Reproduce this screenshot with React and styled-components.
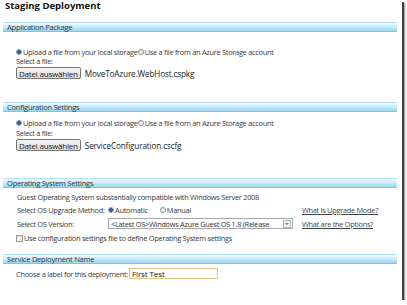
import React from "react";
import styled, { createGlobalStyle } from "styled-components";

const GlobalStyle = createGlobalStyle`
  html, body {
    margin: 0;
    padding: 0;
    background: #fff;
  }
  body {
    font-family: "Open Sans", "DejaVu Sans", sans-serif;
    color: #3a3a3a;
  }
`;

const Frame = styled.div`
  width: 402px;
  height: 300px;
  background: #fff;
  box-shadow: 2px 2px 0 #404040, 3px 3px 2px rgba(0, 0, 0, 0.45);
  overflow: hidden;
  box-sizing: border-box;
  letter-spacing: -0.28px;
`;

const Title = styled.div`
  font-weight: 700;
  font-size: 9.5px;
  line-height: 12px;
  color: #111;
  padding-left: 5px;
  letter-spacing: 0;
`;

const Section = styled.section`
  margin-top: ${(p) => p.$top}px;
`;

const Header = styled.div`
  margin: 0 5px 0 3px;
  height: 10px;
  box-sizing: border-box;
  border-top: 1px solid #b2e0f3;
  border-bottom: 1px solid #74c7e8;
  background: linear-gradient(#f0f9fe, #cdebf9 45%, #9cd8f1);
  font-size: 7.6px;
  line-height: 8px;
  color: #333;
  padding-left: 4px;
`;

const Body = styled.div`
  padding-left: ${(p) => p.$indent || 16}px;
`;

const Row = styled.div`
  display: flex;
  align-items: center;
  height: ${(p) => p.$h || 9}px;
  margin-top: ${(p) => p.$top || 0}px;
  font-size: 7.4px;
  white-space: nowrap;
`;

const RadioDot = styled.span`
  display: inline-block;
  box-sizing: border-box;
  width: 6px;
  height: 6px;
  border-radius: 50%;
  border: 1px solid #8a8a8a;
  background: ${(p) =>
    p.$on
      ? "radial-gradient(circle, #1d5fb8 0 1.6px, #dfe8f3 2px)"
      : "linear-gradient(#e6e6e6, #fff)"};
  margin-right: 1px;
  flex: none;
`;

const Option = styled.label`
  display: inline-flex;
  align-items: center;
  margin-right: ${(p) => p.$gap || 0}px;
`;

const FileButton = styled.button`
  height: 12px;
  padding: 0 2px;
  box-sizing: border-box;
  border: 1px solid #777;
  border-radius: 2px;
  background: linear-gradient(#f4f4f4, #dcdcdc);
  font-family: inherit;
  font-size: 8px;
  line-height: 9px;
  letter-spacing: -0.2px;
  color: #222;
`;

const FileName = styled.span`
  margin-left: 4px;
  font-size: 8.2px;
  letter-spacing: -0.15px;
  color: #222;
`;

const FieldLabel = styled.span`
  width: ${(p) => p.$w}px;
  flex: none;
`;

const Select = styled.div`
  display: flex;
  align-items: center;
  width: 185px;
  height: 11px;
  box-sizing: border-box;
  border: 1px solid #a8a8a8;
  font-size: 7.4px;
  color: #333;
  padding-left: 2px;
  flex: none;
`;

const SelectText = styled.span`
  flex: 1;
  white-space: nowrap;
`;

const Arrow = styled.span`
  width: 8px;
  height: 8px;
  margin-right: 1px;
  box-sizing: border-box;
  border: 1px solid #b4b4b4;
  background: #f2f2f2;
  display: flex;
  align-items: center;
  justify-content: center;
  flex: none;
  &::after {
    content: "";
    border-left: 2px solid transparent;
    border-right: 2px solid transparent;
    border-top: 2px solid #777;
  }
`;

const HelpLink = styled.a`
  margin-left: auto;
  width: 100px;
  color: #444;
  text-decoration: underline;
`;

const Check = styled.span`
  width: 7px;
  height: 7px;
  box-sizing: border-box;
  border: 1px solid #999;
  background: linear-gradient(#e2e2e2, #fafafa);
  margin-right: 1px;
  flex: none;
`;

const TextInput = styled.input`
  width: 89px;
  height: 11px;
  box-sizing: border-box;
  border: 1px solid #e3c27e;
  padding: 0 2px;
  font-family: inherit;
  font-size: 8px;
  letter-spacing: -0.1px;
  color: #222;
  outline: none;
  margin-left: 1px;
`;

const UploadChoice = ({ top }) => (
  <Row $top={top}>
    <Option>
      <RadioDot $on />
      Upload a file from your local storage
    </Option>
    <Option>
      <RadioDot />
      Use a file from an Azure Storage account
    </Option>
  </Row>
);

const FilePicker = ({ name }) => (
  <Row $h={12} $top={2}>
    <FileButton type="button">Datei auswählen</FileButton>
    <FileName>{name}</FileName>
  </Row>
);

export default function App() {
  return (
    <>
      <GlobalStyle />
      <Frame>
        <Title>Staging Deployment</Title>

        <Section $top={10}>
          <Header>Application Package</Header>
          <Body>
            <UploadChoice top={15} />
            <Row>Select a file:</Row>
            <FilePicker name="MoveToAzure.WebHost.cspkg" />
          </Body>
        </Section>

        <Section $top={23}>
          <Header>Configuration Settings</Header>
          <Body>
            <UploadChoice top={6} />
            <Row $top={1}>Select a file:</Row>
            <FilePicker name="ServiceConfiguration.cscfg" />
          </Body>
        </Section>

        <Section $top={27}>
          <Header>Operating System Settings</Header>
          <Body $indent={17}>
            <Row $h={10} $top={4}>
              Guest Operating System substantially compatible with Windows Server 2008
            </Row>
            <Row $h={10} $top={3}>
              <FieldLabel $w={91}>Select OS Upgrade Method:</FieldLabel>
              <Option $gap={12}>
                <RadioDot $on />
                Automatic
              </Option>
              <Option>
                <RadioDot />
                Manual
              </Option>
              <HelpLink href="#">What is Upgrade Mode?</HelpLink>
            </Row>
            <Row $h={11} $top={3}>
              <FieldLabel $w={91}>Select OS Version:</FieldLabel>
              <Select>
                <SelectText>&lt;Latest OS&gt;Windows Azure Guest OS 1.8 (Release</SelectText>
                <Arrow />
              </Select>
              <HelpLink href="#">What are the Options?</HelpLink>
            </Row>
          </Body>
          <Body>
            <Row $h={10} $top={4}>
              <Check />
              Use configuration settings file to define Operating System settings
            </Row>
          </Body>
        </Section>

        <Section $top={11}>
          <Header>Service Deployment Name</Header>
          <Body>
            <Row $h={11} $top={4}>
              <span>Choose a label for this deployment:</span>
              <TextInput defaultValue="First Test" />
            </Row>
          </Body>
        </Section>
      </Frame>
    </>
  );
}
